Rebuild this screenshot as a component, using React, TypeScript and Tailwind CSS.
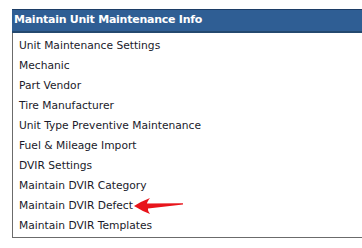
const items = [
  'Unit Maintenance Settings',
  'Mechanic',
  'Part Vendor',
  'Tire Manufacturer',
  'Unit Type Preventive Maintenance',
  'Fuel & Mileage Import',
  'DVIR Settings',
  'Maintain DVIR Category',
  'Maintain DVIR Defect',
  'Maintain DVIR Templates',
];

const RedArrow = () => (
  <svg width="50" height="18" viewBox="0 0 50 18" className="ml-[1px]">
    <path d="M0 9 Q8 4 16 1 Q13 5 13 6.5 L49 6.2 L49 7.6 L14 11.5 Q13.5 13.5 16 17 Q8 14 0 9 Z" fill="#e8141b" />
  </svg>
);

export default function App() {
  return (
    <div className="w-[362px] h-[248px] overflow-hidden bg-white font-['DejaVu_Sans',Verdana,sans-serif]">
      <div className="ml-[12px] mt-[9px] w-[350px]">
        <div className="h-[24px] bg-[#2f5e94] border-t border-[#1c3d66] border-b-2 border-b-[#24496f] flex items-center pl-[2px]">
          <span className="text-white font-bold text-[11px] tracking-[-0.25px]">Maintain Unit Maintenance Info</span>
        </div>
        <div className="border-l border-b border-[#6b6b6b] pt-[3px] pb-[1px]">
          {items.map((it) => (
            <div key={it} className="h-[20px] flex items-center pl-[6px] text-[10.7px] text-[#1a1a2a]">
              <span>{it}</span>
              {it === 'Maintain DVIR Defect' && <RedArrow />}
            </div>
          ))}
        </div>
      </div>
    </div>
  );
}
